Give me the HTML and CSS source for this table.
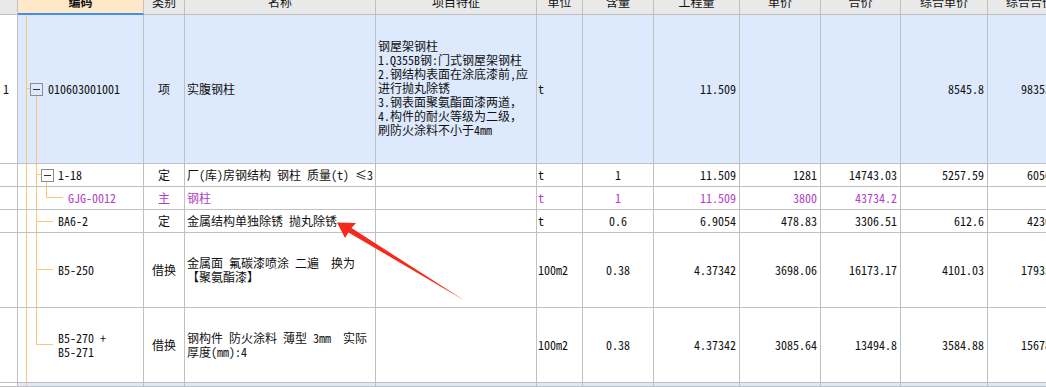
FILE: index.html
```
<!DOCTYPE html>
<html lang="zh-CN">
<head>
<meta charset="utf-8">
<title>清单</title>
<link rel="stylesheet" href="styles.css">
</head>
<body>
<div class="sheet">
  <div class="row head">
    <div class="c"></div>
    <div class="c code"><span>编码</span></div>
    <div class="c"><span>类别</span></div>
    <div class="c"><span>名称</span></div>
    <div class="c"><span>项目特征</span></div>
    <div class="c"><span>单位</span></div>
    <div class="c"><span>含量</span></div>
    <div class="c"><span>工程量</span></div>
    <div class="c"><span>单价</span></div>
    <div class="c"><span>合价</span></div>
    <div class="c"><span>综合单价</span></div>
    <div class="c"><span>综合合价</span></div>
  </div>

  <div class="row sel r1">
    <div class="c idx">1</div>
    <div class="c t1"><span class="tog"></span>010603001001</div>
    <div class="c ctr">项</div>
    <div class="c l">实腹钢柱</div>
    <div class="c l feat"><div>钢屋架钢柱<br>1.Q355B钢:门式钢屋架钢柱<br>2.钢结构表面在涂底漆前,应<br>进行抛丸除锈<br>3.钢表面聚氨酯面漆两道，<br>4.构件的耐火等级为二级，<br>刷防火涂料不小于4mm</div></div>
    <div class="c u">t</div>
    <div class="c ctr"></div>
    <div class="c r">11.509</div>
    <div class="c r"></div>
    <div class="c r"></div>
    <div class="c r">8545.8</div>
    <div class="c r">98353.61</div>
  </div>

  <div class="row r2">
    <div class="c idx"></div>
    <div class="c t2"><span class="tog"></span>1-18</div>
    <div class="c ctr">定</div>
    <div class="c l">厂(库)房钢结构 钢柱 质量(t) ≤3</div>
    <div class="c l"></div>
    <div class="c u">t</div>
    <div class="c ctr">1</div>
    <div class="c r">11.509</div>
    <div class="c r">1281</div>
    <div class="c r">14743.03</div>
    <div class="c r">5257.59</div>
    <div class="c r">60509.6</div>
  </div>

  <div class="row r3 p">
    <div class="c idx"></div>
    <div class="c t3">GJG-0012</div>
    <div class="c ctr">主</div>
    <div class="c l">钢柱</div>
    <div class="c l"></div>
    <div class="c u">t</div>
    <div class="c ctr">1</div>
    <div class="c r">11.509</div>
    <div class="c r">3800</div>
    <div class="c r">43734.2</div>
    <div class="c r"></div>
    <div class="c r"></div>
  </div>

  <div class="row r4">
    <div class="c idx"></div>
    <div class="c t4">BA6-2</div>
    <div class="c ctr">定</div>
    <div class="c l">金属结构单独除锈 抛丸除锈</div>
    <div class="c l"></div>
    <div class="c u">t</div>
    <div class="c ctr">0.6</div>
    <div class="c r">6.9054</div>
    <div class="c r">478.83</div>
    <div class="c r">3306.51</div>
    <div class="c r">612.6</div>
    <div class="c r">4230.25</div>
  </div>

  <div class="row r5">
    <div class="c idx"></div>
    <div class="c t5">B5-250</div>
    <div class="c ctr">借换</div>
    <div class="c l"><div>金属面 氟碳漆喷涂 二遍 &nbsp;换为<br>【聚氨酯漆】</div></div>
    <div class="c l"></div>
    <div class="c u">100m2</div>
    <div class="c ctr">0.38</div>
    <div class="c r">4.37342</div>
    <div class="c r">3698.06</div>
    <div class="c r">16173.17</div>
    <div class="c r">4101.03</div>
    <div class="c r">17935.53</div>
  </div>

  <div class="row r6">
    <div class="c idx"></div>
    <div class="c t6"><div>B5-270 +<br>B5-271</div></div>
    <div class="c ctr">借换</div>
    <div class="c l"><div>钢构件 防火涂料 薄型 3mm &nbsp;实际<br>厚度(mm):4</div></div>
    <div class="c l"></div>
    <div class="c u">100m2</div>
    <div class="c ctr">0.38</div>
    <div class="c r">4.37342</div>
    <div class="c r">3085.64</div>
    <div class="c r">13494.8</div>
    <div class="c r">3584.88</div>
    <div class="c r">15678.21</div>
  </div>

  <div class="row sel r7">
    <div class="c idx"></div>
    <div class="c t7"></div>
    <div class="c"></div>
    <div class="c"></div>
    <div class="c"></div>
    <div class="c"></div>
    <div class="c"></div>
    <div class="c"></div>
    <div class="c"></div>
    <div class="c"></div>
    <div class="c"></div>
    <div class="c"></div>
  </div>
</div>

<svg class="arrow" width="1046" height="387" viewBox="0 0 1046 387" aria-hidden="true">
  <polygon points="337,222.5 356,223 351.5,228 464.5,300.5 348.5,232.5 345,238" fill="#f52a1c"/>
</svg>
</body>
</html>
```

FILE: styles.css
```
* { box-sizing: border-box; }
html, body { margin: 0; padding: 0; }
body {
  position: relative;
  width: 1046px;
  height: 387px;
  overflow: hidden;
  background: #fff;
  font-family: "Noto Sans Mono CJK SC", "Noto Sans CJK SC", sans-serif;
  font-size: 12px;
  color: #111;
}
.sheet { width: 1082px; }
.row {
  display: grid;
  grid-template-columns: 18px 126px 41px 191px 161px 46px 71px 86px 81px 80px 87px 85px;
}
.c {
  border-right: 1px solid #c0c0c0;
  border-bottom: 1px solid #c0c0c0;
  display: flex;
  align-items: center;
  overflow: hidden;
  white-space: nowrap;
  line-height: 14px;
  min-width: 0;
}
.head { height: 15px; background: #e9e9e9; }
.head .c { justify-content: center; align-items: flex-start; }
.head .c span { margin-top: -4px; line-height: 12px; }
.head .code { background: #ffe8c8; border-bottom: 2px solid #3d8ff2; }
.head .code span { font-weight: bold; }

.r1 { height: 149px; }
.r2, .r3, .r4 { height: 23px; }
.r5, .r6 { height: 75px; }
.r7 { height: 4px; }

.sel .c { background-color: #dde9fc; }
.sel .idx { background-color: #fff; }
.idx { padding-left: 3px; }

.l { padding-left: 2px; }
.u { padding-left: 1px; }
.ctr { justify-content: center; }
.r { justify-content: flex-end; padding-right: 3px; }
.feat > div { padding-bottom: 2px; }

.p .c { color: #b03fc6; }

.tog {
  position: relative;
  flex: none;
  width: 13px;
  height: 13px;
  border: 1px solid #8c8c8c;
  margin-right: 5px;
}
.tog::before {
  content: "";
  position: absolute;
  left: 2px;
  right: 2px;
  top: 5px;
  height: 1px;
  background: #333;
}
.t2 .tog { margin-right: 4px; }

.t1, .t2, .t3, .t4, .t5, .t6, .t7 {
  --o: linear-gradient(#fcc675, #fcc675);
  background-repeat: no-repeat;
}
.t1 {
  padding-left: 12px;
  background-image: var(--o), var(--o), var(--o);
  background-position: 8px 0, 8px 73px, 18px 80px;
  background-size: 1px 100%, 4px 1px, 1px 100%;
}
.t2 {
  padding-left: 23px;
  background-image: var(--o), var(--o), var(--o), var(--o);
  background-position: 8px 0, 18px 0, 18px 10px, 28px 17px;
  background-size: 1px 100%, 1px 100%, 5px 1px, 1px 100%;
}
.t3 {
  padding-left: 50px;
  background-image: var(--o), var(--o), var(--o), var(--o);
  background-position: 8px 0, 18px 0, 28px 0, 28px 10px;
  background-size: 1px 100%, 1px 100%, 1px 10px, 17px 1px;
}
.t4 {
  padding-left: 40px;
  background-image: var(--o), var(--o), var(--o);
  background-position: 8px 0, 18px 0, 18px 11px;
  background-size: 1px 100%, 1px 100%, 17px 1px;
}
.t5 {
  padding-left: 40px;
  background-image: var(--o), var(--o), var(--o);
  background-position: 8px 0, 18px 0, 18px 36px;
  background-size: 1px 100%, 1px 100%, 17px 1px;
}
.t6 {
  padding-left: 40px;
  background-image: var(--o), var(--o), var(--o);
  background-position: 8px 0, 18px 0, 18px 36px;
  background-size: 1px 100%, 1px 37px, 17px 1px;
}
.t7 {
  background-image: var(--o);
  background-position: 8px 0;
  background-size: 1px 100%;
}

.arrow {
  position: absolute;
  left: 0;
  top: 0;
  pointer-events: none;
}
```
